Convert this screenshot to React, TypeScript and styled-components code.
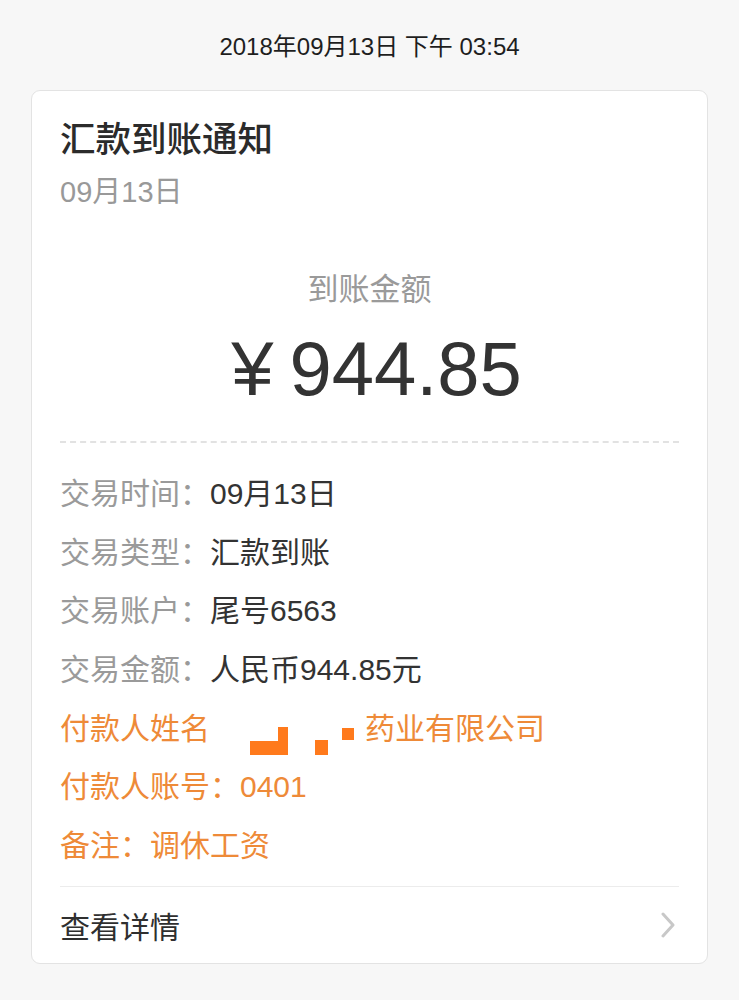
import React from "react";
import styled, { createGlobalStyle } from "styled-components";

const GlobalStyle = createGlobalStyle`
  html, body {
    margin: 0;
    padding: 0;
    background: #f7f7f7;
  }
  body {
    font-family: "Liberation Sans", "Noto Sans CJK SC", sans-serif;
  }
`;

const Page = styled.div`
  width: 739px;
  min-height: 1000px;
  box-sizing: border-box;
  padding: 29px 31px 0 31px;
  background: #f7f7f7;
`;

const TimeStamp = styled.div`
  text-align: center;
  font-size: 24px;
  line-height: 36px;
  color: #1e1e1e;
  margin-bottom: 25px;
`;

const Card = styled.div`
  background: #fff;
  border: 1px solid #e3e3e3;
  border-radius: 9px;
  padding: 0 28px;
`;

const Title = styled.div`
  font-size: 35.5px;
  line-height: 44px;
  font-weight: 500;
  color: #2b2b2b;
  padding-top: 27px;
`;

const SubDate = styled.div`
  font-size: 29px;
  line-height: 40px;
  color: #999;
  margin-top: 10px;
`;

const AmountLabel = styled.div`
  text-align: center;
  font-size: 31px;
  line-height: 40px;
  color: #9a9a9a;
  margin-top: 58px;
`;

const Amount = styled.div`
  text-align: center;
  font-size: 76px;
  line-height: 90px;
  color: #333;
  margin-top: 14px;
  padding-left: 14px;
`;

const Yen = styled.span`
  margin-right: 16px;
`;

const Dashed = styled.div`
  border-top: 2px dashed #e2e2e2;
  margin-top: 27px;
`;

const Rows = styled.div`
  padding-top: 22px;
  padding-bottom: 10px;
`;

const Row = styled.div<{ $accent?: boolean }>`
  display: flex;
  align-items: center;
  font-size: 30px;
  line-height: 58.7px;
  height: 58.7px;
  color: ${(p) => (p.$accent ? "#ee8a38" : "#333")};
  white-space: nowrap;
`;

const Label = styled.span<{ $accent?: boolean }>`
  color: ${(p) => (p.$accent ? "#ee8a38" : "#9a9a9a")};
  width: 150px;
  flex: none;
`;

const Redact = styled.span`
  position: relative;
  display: inline-block;
  width: 155px;
  height: 58px;
  flex: none;
`;

const Mark = styled.span`
  position: absolute;
  background: #ff7a1c;
`;

const Solid = styled.div`
  border-top: 1px solid #ececec;
`;

const Footer = styled.div`
  display: flex;
  align-items: center;
  justify-content: space-between;
  height: 76px;
  font-size: 30px;
  color: #2f2f2f;
`;

const Chevron = styled.svg`
  width: 14px;
  height: 26px;
  margin-right: 4px;
`;

const marks = [
  { left: 40, top: 41, width: 38, height: 14 },
  { left: 68, top: 27, width: 10, height: 15 },
  { left: 105, top: 40, width: 13, height: 15 },
  { left: 132, top: 28, width: 12, height: 12 },
];

const rows = [
  { label: "交易时间：", value: "09月13日" },
  { label: "交易类型：", value: "汇款到账" },
  { label: "交易账户：", value: "尾号6563" },
  { label: "交易金额：", value: "人民币944.85元" },
];

const App = () => {
  return (
    <>
      <GlobalStyle />
      <Page>
        <TimeStamp>2018年09月13日 下午 03:54</TimeStamp>
        <Card>
          <Title>汇款到账通知</Title>
          <SubDate>09月13日</SubDate>
          <AmountLabel>到账金额</AmountLabel>
          <Amount>
            <Yen>¥</Yen>944.85
          </Amount>
          <Dashed />
          <Rows>
            {rows.map((r) => (
              <Row key={r.label}>
                <Label>{r.label}</Label>
                {r.value}
              </Row>
            ))}
            <Row $accent>
              付款人姓名
              <Redact>
                {marks.map((m, i) => (
                  <Mark
                    key={i}
                    style={{ left: m.left, top: m.top, width: m.width, height: m.height }}
                  />
                ))}
              </Redact>
              药业有限公司
            </Row>
            <Row $accent>付款人账号：0401</Row>
            <Row $accent>备注：调休工资</Row>
          </Rows>
          <Solid />
          <Footer>
            查看详情
            <Chevron viewBox="0 0 14 26">
              <path
                d="M2 2 L12 13 L2 24"
                fill="none"
                stroke="#c8c8c8"
                strokeWidth="3"
                strokeLinecap="round"
                strokeLinejoin="round"
              />
            </Chevron>
          </Footer>
        </Card>
      </Page>
    </>
  );
};

export default App;
